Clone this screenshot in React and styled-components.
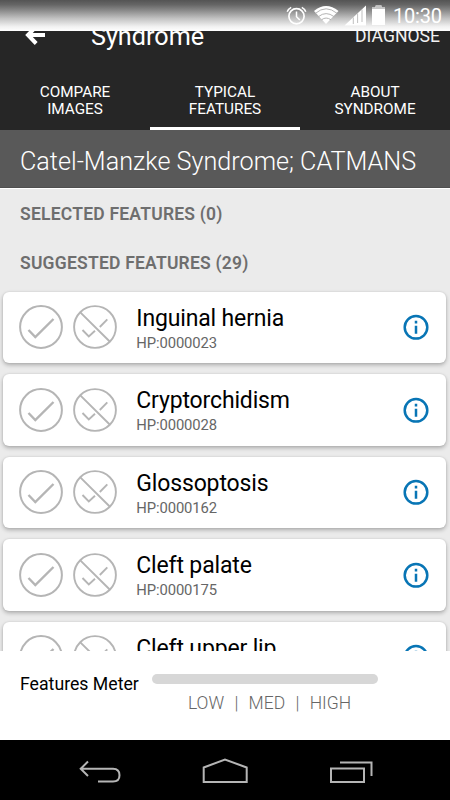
import React from "react";
import styled, { createGlobalStyle } from "styled-components";

const GlobalStyle = createGlobalStyle`
  * { box-sizing: border-box; }
  html, body { margin: 0; padding: 0; overflow: hidden; }
  body { font-family: Roboto, sans-serif; background: #ebebeb; }
  svg { display: block; flex: none; }
`;

const Screen = styled.div`
  width: 450px;
  height: 800px;
  display: flex;
  flex-direction: column;
  overflow: hidden;
  background: #ebebeb;
`;

const StatusBar = styled.header`
  flex: none;
  height: 31px;
  display: flex;
  justify-content: flex-end;
  background: linear-gradient(#545454 0%, #656565 15%, #8d8d8d 35%, #c3c3c3 60%, #f0f0f0 85%, #fff 100%);
`;

const Clock = styled.time`
  width: 59px;
  padding-left: 2px;
  font-size: 20px;
  line-height: 33px;
  letter-spacing: -0.2px;
  color: #fff;
`;

const AppHeader = styled.div`
  flex: none;
  height: 99px;
  display: flex;
  flex-direction: column;
  overflow: hidden;
  background: #262626;
  color: #fff;
`;

const TitleRow = styled.div`
  flex: none;
  height: 56px;
  margin-top: -24px;
  padding: 0 10px 0 25px;
  display: flex;
  align-items: center;
`;

const Title = styled.h1`
  flex: 1;
  margin: 4px 0 0 45px;
  font-size: 25.2px;
  font-weight: 400;
  line-height: 32px;
`;

const Diagnose = styled.span`
  margin-top: 2px;
  font-size: 17.6px;
  line-height: 24px;
  color: #f2f2f2;
`;

const Tabs = styled.nav`
  flex: 1;
  display: grid;
  grid-template-columns: repeat(3, 150px);
`;

const Tab = styled.div`
  padding-top: 21px;
  border-bottom: 3px solid ${(p) => (p.$active ? "#fff" : "transparent")};
  font-size: 15.3px;
  line-height: 17px;
  text-align: center;
  white-space: pre-line;
`;

const SyndromeName = styled.h2`
  flex: none;
  height: 59px;
  margin: 0 0 1px;
  padding-left: 20px;
  border-bottom: 1px solid #fff;
  background: linear-gradient(#595959 57px, #4f4f4f 57px) padding-box;
  color: #fff;
  font-size: 25.2px;
  font-weight: 300;
  line-height: 63px;
  white-space: nowrap;
`;

const Content = styled.main`
  flex: none;
  height: 461px;
  overflow: hidden;
`;

const SectionTitle = styled.h3`
  height: 49px;
  margin: 0;
  padding-left: 20px;
  font-size: 17.5px;
  font-weight: 600;
  line-height: 48px;
  letter-spacing: 0.22px;
  color: #6e6e6e;
`;

const Cards = styled.div`
  padding: 3.6px 3.6px 0 3.4px;
  display: flex;
  flex-direction: column;
  gap: 11px;
`;

const Card = styled.article`
  flex: none;
  height: 71.5px;
  padding: 0 17px 0 15.6px;
  display: flex;
  align-items: center;
  border-radius: 6px;
  background: #fff;
  box-shadow: 0 2px 4px rgba(0, 0, 0, 0.27), 0 0 2px rgba(0, 0, 0, 0.1);
`;

const Choices = styled.div`
  display: flex;
  gap: 10px;
`;

const CardText = styled.div`
  flex: 1;
  margin: 4px 0 0 19.3px;
`;

const FeatureName = styled.div`
  font-size: 23px;
  line-height: 28px;
  letter-spacing: -0.15px;
  color: #000;
`;

const FeatureCode = styled.div`
  font-size: 14.8px;
  line-height: 21px;
  letter-spacing: -0.1px;
  color: #666;
`;

const Meter = styled.footer`
  flex: none;
  height: 89px;
  padding: 22px 0 0 20px;
  display: flex;
  background: #fff;
`;

const MeterLabel = styled.div`
  width: 132px;
  font-size: 17.7px;
  line-height: 22px;
  color: #000;
  white-space: nowrap;
`;

const Gauge = styled.div`
  width: 226px;
  display: flex;
  flex-direction: column;
  align-items: center;
`;

const Track = styled.div`
  width: 226px;
  height: 10px;
  margin-top: 1px;
  border-radius: 5px;
  background: #d7d7d7;
`;

const Levels = styled.div`
  margin: 9px 0 0 9px;
  display: flex;
  font-size: 17.5px;
  font-weight: 300;
  line-height: 20px;
  color: #666;
`;

const Divider = styled.span`
  width: 24.5px;
  text-align: center;
`;

const NavBar = styled.nav`
  flex: none;
  height: 60px;
  background: #000;
  display: flex;
  justify-content: center;
`;

const StatusIcons = () => (
  <svg width="106" height="31" viewBox="285 0 106 31" fill="none" stroke="#fff">
    <circle cx="296.5" cy="16.3" r="7.6" strokeWidth="1.7" />
    <path d="M296.5 11.5v5.2l3.3 3.3M287.2 11.8q1-3 4-4.5M305.800 11.800q-1-3-4-4.500" strokeWidth="1.500" />
    <path d="M314 11Q326 1 338.500 11L326 24Z" fill="#fff" stroke="none" />
    <path d="M315.500 13.300q10.500-9 21.500 0M318.500 16.600q7.500-6 15.500 0M321.500 19.800q4.500-3.500 9.500 0" stroke="#b4b4b4" strokeWidth="1" />
    <path d="M344.500 25.500L366 5.500V25.500Z" fill="#fff" stroke="none" />
    <path d="M353.300 17.500V24M357.600 13.500V23M362 9.500V22" stroke="#b8b8b8" strokeWidth="0.900" />
    <path d="M375.500 5.500h6v2h3.500V25h-13V7.500h3.500Z" fill="#fff" stroke="none" />
    <path d="M376 5.500h5.500v2h3.500V9h-13V7.500h4Z" fill="#c4c4c4" stroke="none" />
  </svg>
);

const BackArrow = () => (
  <svg width="21" height="20" viewBox="25 25 21 20">
    <path d="M45 35H29M36.200 26.500L28 35l8.200 8.500" fill="none" stroke="#fff" strokeWidth="4" />
  </svg>
);

const Accept = () => (
  <svg width="44" height="44" viewBox="0 0 44 44" fill="none" stroke="#b5b5b5" strokeWidth="2">
    <circle cx="22" cy="22" r="20.900" />
    <path d="M9.500 25l6.800 7L34.500 14" strokeWidth="2.400" />
  </svg>
);

const Reject = () => (
  <svg width="44" height="44" viewBox="0 0 44 44" fill="none" stroke="#b5b5b5" strokeWidth="1.900">
    <circle cx="22" cy="22" r="20.900" />
    <path d="M7.300 7.300l29.400 29.200M9.500 25l6.300 6.500 6.200-5.800M26.800 22l7.500-7.700" />
  </svg>
);

const Info = () => (
  <svg width="26" height="26" viewBox="0 0 26 26" fill="none" stroke="#0875b5" strokeWidth="2.500">
    <circle cx="13" cy="13.300" r="11.300" />
    <path d="M13 11.800v8M13 6.800v2.700" />
  </svg>
);

const NavIcons = () => (
  <svg width="450" height="60" viewBox="0 740 450 60" fill="none" stroke="#b5b5b5" strokeWidth="2">
    <path d="M98 781.500h15q6.500 0 6.500-6.300t-6.500-6.400H81M88 761.500l-7.300 7.300 7.300 7.200" />
    <path d="M203.700 782v-14.500L225 759.500l21.700 8V782Z" />
    <path d="M331 768.500h33v13.400h-33ZM340 762.500h31.500V776" />
  </svg>
);

const tabs = [
  { label: "COMPARE\nIMAGES" },
  { label: "TYPICAL\nFEATURES", active: true },
  { label: "ABOUT\nSYNDROME" },
];

const features = [
  { name: "Inguinal hernia", code: "HP:0000023" },
  { name: "Cryptorchidism", code: "HP:0000028" },
  { name: "Glossoptosis", code: "HP:0000162" },
  { name: "Cleft palate", code: "HP:0000175" },
  { name: "Cleft upper lip", code: "HP:0000204" },
];

export default function App() {
  return (
    <Screen>
      <GlobalStyle />
      <StatusBar>
        <StatusIcons />
        <Clock>10:30</Clock>
      </StatusBar>
      <AppHeader>
        <TitleRow>
          <BackArrow />
          <Title>Syndrome</Title>
          <Diagnose>DIAGNOSE</Diagnose>
        </TitleRow>
        <Tabs>
          {tabs.map((t) => (
            <Tab key={t.label} $active={t.active}>{t.label}</Tab>
          ))}
        </Tabs>
      </AppHeader>
      <SyndromeName>Catel-Manzke Syndrome; CATMANS</SyndromeName>
      <Content>
        <SectionTitle>SELECTED FEATURES (0)</SectionTitle>
        <SectionTitle>SUGGESTED FEATURES (29)</SectionTitle>
        <Cards>
          {features.map((f) => (
            <Card key={f.code}>
              <Choices>
                <Accept />
                <Reject />
              </Choices>
              <CardText>
                <FeatureName>{f.name}</FeatureName>
                <FeatureCode>{f.code}</FeatureCode>
              </CardText>
              <Info />
            </Card>
          ))}
        </Cards>
      </Content>
      <Meter>
        <MeterLabel>Features Meter</MeterLabel>
        <Gauge>
          <Track />
          <Levels>
            <span>LOW</span>
            <Divider>|</Divider>
            <span>MED</span>
            <Divider>|</Divider>
            <span>HIGH</span>
          </Levels>
        </Gauge>
      </Meter>
      <NavBar>
        <NavIcons />
      </NavBar>
    </Screen>
  );
}
